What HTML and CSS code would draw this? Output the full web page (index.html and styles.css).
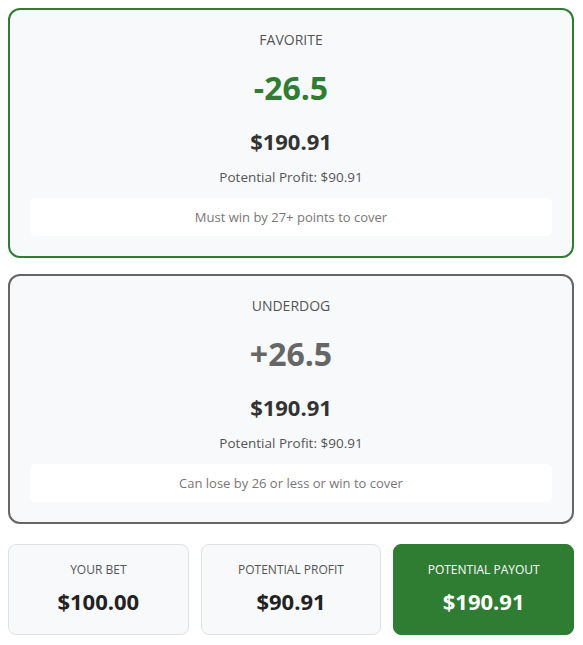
FILE: index.html
```html
<!DOCTYPE html>
<html>
<head>
<meta charset="utf-8">
<link rel="stylesheet" href="styles.css">
</head>
<body>
<div class="wrap">
  <div class="card card-fav">
    <div class="label">FAVORITE</div>
    <div class="spread spread-fav">-26.5</div>
    <div class="payout">$190.91</div>
    <div class="profit">Potential Profit: $90.91</div>
    <div class="note">Must win by 27+ points to cover</div>
  </div>
  <div class="card card-dog">
    <div class="label">UNDERDOG</div>
    <div class="spread spread-dog">+26.5</div>
    <div class="payout">$190.91</div>
    <div class="profit">Potential Profit: $90.91</div>
    <div class="note">Can lose by 26 or less or win to cover</div>
  </div>
  <div class="summary">
    <div class="box">
      <div class="box-label">YOUR BET</div>
      <div class="box-value">$100.00</div>
    </div>
    <div class="box">
      <div class="box-label">POTENTIAL PROFIT</div>
      <div class="box-value">$90.91</div>
    </div>
    <div class="box box-green">
      <div class="box-label">POTENTIAL PAYOUT</div>
      <div class="box-value">$190.91</div>
    </div>
  </div>
</div>
</body>
</html>
```
FILE: styles.css
```css
* { box-sizing: border-box; }
body {
  margin: 8px;
  background: #fff;
  font-family: "Open Sans", "Noto Sans", sans-serif;
  color: #333;
}
.wrap { width: 566px; }
.card {
  background: #f8f9fa;
  border: 2px solid #666;
  border-radius: 12px;
  padding: 20px 20px 20px;
  text-align: center;
  margin-bottom: 16px;
}
.card-fav { border-color: #2e7d32; }
.card-dog { margin-bottom: 20px; }
.label {
  font-size: 14px;
  line-height: 20px;
  color: #555;
  margin-bottom: 18px;
}
.spread {
  font-size: 32px;
  font-weight: 700;
  line-height: 40px;
  margin-bottom: 18px;
}
.spread-fav { color: #2e7d32; }
.spread-dog { color: #666; }
.payout {
  font-size: 22px;
  font-weight: 700;
  line-height: 30px;
  color: #333;
  margin-bottom: 11px;
}
.profit {
  font-size: 13.5px;
  line-height: 20px;
  color: #555;
  margin-bottom: 11px;
}
.note {
  background: #fff;
  border-radius: 6px;
  height: 38px;
  line-height: 38px;
  font-size: 13px;
  color: #777;
}
.summary {
  display: grid;
  grid-template-columns: 1fr 1fr 1fr;
  gap: 12px;
}
.box {
  background: #f8f9fa;
  border: 1px solid #dee2e6;
  border-radius: 8px;
  height: 91px;
  padding-top: 16px;
  text-align: center;
}
.box-label {
  font-size: 12px;
  line-height: 18px;
  color: #555;
  margin-bottom: 7px;
}
.box-value {
  font-size: 22px;
  font-weight: 700;
  line-height: 30px;
  color: #222;
}
.box-green {
  background: #2e7d32;
  border-color: #2e7d32;
}
.box-green .box-label, .box-green .box-value { color: #fff; }
```
